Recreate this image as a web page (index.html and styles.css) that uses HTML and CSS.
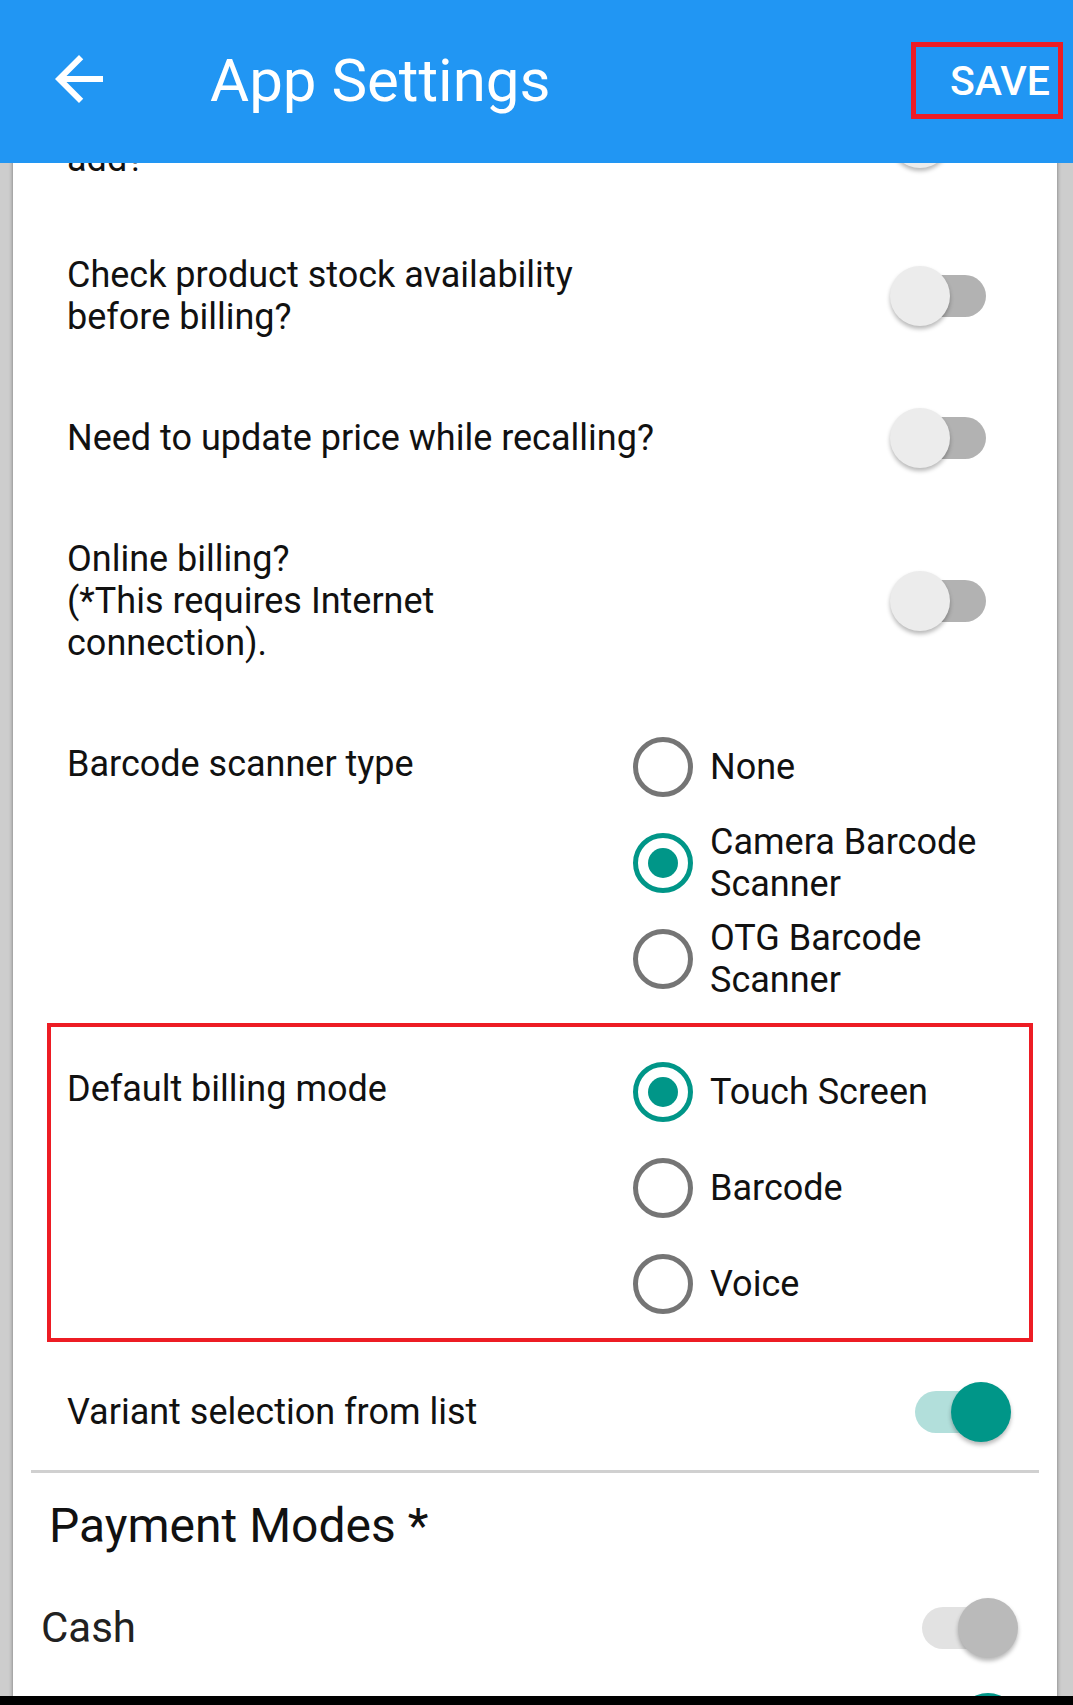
FILE: index.html
```html
<!DOCTYPE html>
<html lang="en">
<head>
    <meta charset="UTF-8">
    <meta name="viewport" content="width=device-width, initial-scale=1.0">
    <link rel="stylesheet" href="styles.css">
    <title>App Settings</title>
</head>
<body>
    <div class="screen">
        <header class="app-bar">
            <span class="back">
                <svg viewBox="0 0 24 24" width="72" height="72"><path fill="#fff" d="M20 11H7.83l5.59-5.59L12 4l-8 8 8 8 1.41-1.41L7.83 13H20v-2z"/></svg>
            </span>
            <h1 class="title">App Settings</h1>
            <div class="save">SAVE</div>
        </header>

        <main class="scroll">
            <div class="card">
                <div class="row row-first">
                    <div class="row-label">Round off bill amount on every item<br>add?</div>
                    <span class="switch"><span class="track"></span><span class="thumb"></span></span>
                </div>

                <div class="row">
                    <div class="row-label">Check product stock availability<br>before billing?</div>
                    <span class="switch"><span class="track"></span><span class="thumb"></span></span>
                </div>

                <div class="row">
                    <div class="row-label">Need to update price while recalling?</div>
                    <span class="switch"><span class="track"></span><span class="thumb"></span></span>
                </div>

                <div class="row">
                    <div class="row-label">Online billing?<br>(*This requires Internet<br>connection).</div>
                    <span class="switch"><span class="track"></span><span class="thumb"></span></span>
                </div>

                <div class="row row-radio">
                    <div class="row-label">Barcode scanner type</div>
                    <div class="radio-group">
                        <div class="radio"><span class="radio-dot"></span><span class="radio-text">None</span></div>
                        <div class="radio checked"><span class="radio-dot"></span><span class="radio-text">Camera Barcode Scanner</span></div>
                        <div class="radio"><span class="radio-dot"></span><span class="radio-text">OTG Barcode Scanner</span></div>
                    </div>
                </div>

                <div class="row row-radio marked">
                    <div class="row-label">Default billing mode</div>
                    <div class="radio-group">
                        <div class="radio checked"><span class="radio-dot"></span><span class="radio-text">Touch Screen</span></div>
                        <div class="radio"><span class="radio-dot"></span><span class="radio-text">Barcode</span></div>
                        <div class="radio"><span class="radio-dot"></span><span class="radio-text">Voice</span></div>
                    </div>
                </div>

                <div class="row row-variant">
                    <div class="row-label">Variant selection from list</div>
                    <span class="switch on"><span class="track"></span><span class="thumb"></span></span>
                </div>

                <div class="divider"></div>

                <h2 class="section-title">Payment Modes *</h2>

                <div class="pay-list">
                    <div class="pay-row">
                        <span class="pay-label">Cash</span>
                        <span class="switch locked"><span class="track"></span><span class="thumb"></span></span>
                    </div>
                    <div class="pay-row">
                        <span class="pay-label">Card</span>
                        <span class="switch on"><span class="track"></span><span class="thumb"></span></span>
                    </div>
                </div>
            </div>
        </main>

        <div class="nav-bar"></div>
    </div>
</body>
</html>
```

FILE: styles.css
```css
body, html {
    margin: 0;
    background-color: #cdcdcd;
    font-family: Roboto, "Noto Sans", sans-serif;
}

.screen {
    height: 1705px;
    display: flex;
    flex-direction: column;
    overflow: hidden;
}

/* top bar */
.app-bar {
    height: 163px;
    flex-shrink: 0;
    box-sizing: border-box;
    padding-bottom: 2px;
    display: flex;
    align-items: center;
    background-color: #2196f3;
    color: #fff;
    position: relative;
    z-index: 1;
}

.back {
    display: flex;
    margin-left: 43px;
    margin-top: -3px;
}

.title {
    margin: 0 0 0 95px;
    font-size: 60px;
    font-weight: 400;
    line-height: 72px;
}

.save {
    margin-left: auto;
    margin-right: 10px;
    height: 77px;
    box-sizing: border-box;
    padding: 0 8px 0 34px;
    display: flex;
    align-items: center;
    border: 5px solid #ed1c24;
    font-size: 41px;
    font-weight: 500;
}

/* list */
.scroll {
    flex: 1;
    overflow: hidden;
}

.card {
    margin: -106px 16px 0 13px;
    background-color: #fff;
    box-shadow: 0 0 4px rgba(0, 0, 0, 0.45);
}

.row {
    display: flex;
    align-items: center;
    padding: 35px 61px 35px 54px;
    position: relative;
}

.row-first {
    padding-top: 39px;
    padding-bottom: 39px;
}

.row-label {
    flex: 1;
    font-size: 36px;
    line-height: 42px;
    color: #111;
}

.row-variant {
    padding: 33px 46px 25px 54px;
}

/* switch */
.switch {
    position: relative;
    width: 106px;
    height: 60px;
    flex-shrink: 0;
}

.track {
    position: absolute;
    left: 10px;
    right: 10px;
    top: 9px;
    height: 42px;
    border-radius: 21px;
    background-color: #b2b2b2;
}

.thumb {
    position: absolute;
    left: 0;
    top: 0;
    width: 60px;
    height: 60px;
    border-radius: 50%;
    background-color: #ececec;
    box-shadow: 0 3px 4px rgba(0, 0, 0, 0.28);
}

.switch.on .track {
    background-color: #b2dfdb;
}

.switch.on .thumb {
    left: auto;
    right: 0;
    background-color: #009688;
}

.switch.locked .track {
    background-color: #e2e2e2;
}

.switch.locked .thumb {
    left: auto;
    right: 0;
    background-color: #bababa;
}

/* radio rows */
.row-radio {
    align-items: flex-start;
    padding: 20px 0 17px 54px;
}

.row-radio .row-label {
    flex: none;
    width: 566px;
    margin-top: 24px;
}

.radio-group {
    width: 370px;
}

.radio {
    display: flex;
    align-items: center;
    min-height: 96px;
}

.radio-dot {
    width: 60px;
    height: 60px;
    box-sizing: border-box;
    flex-shrink: 0;
    margin-right: 17px;
    border: 5px solid #757575;
    border-radius: 50%;
    position: relative;
}

.radio.checked .radio-dot {
    border-color: #009688;
}

.radio.checked .radio-dot::after {
    content: "";
    position: absolute;
    top: 10px;
    left: 10px;
    width: 30px;
    height: 30px;
    border-radius: 50%;
    background-color: #009688;
}

.radio-text {
    font-size: 36px;
    line-height: 42px;
    color: #111;
}

.marked::after {
    content: "";
    position: absolute;
    top: -1px;
    bottom: 7px;
    left: 34px;
    right: 24px;
    border: 4px solid #ed1c24;
}

.divider {
    height: 3px;
    margin: 3px 18px 0;
    background-color: #d0d0d0;
}

.section-title {
    margin: 25px 0 0 36px;
    font-size: 48px;
    font-weight: 400;
    line-height: 56px;
    color: #111;
}

.pay-list {
    margin-top: 26px;
}

.pay-row {
    height: 95px;
    display: flex;
    align-items: center;
    justify-content: space-between;
    padding: 0 39px 0 28px;
}

.pay-label {
    font-size: 42px;
    color: #212121;
}

.nav-bar {
    height: 9px;
    flex-shrink: 0;
    background-color: #000;
}
```
